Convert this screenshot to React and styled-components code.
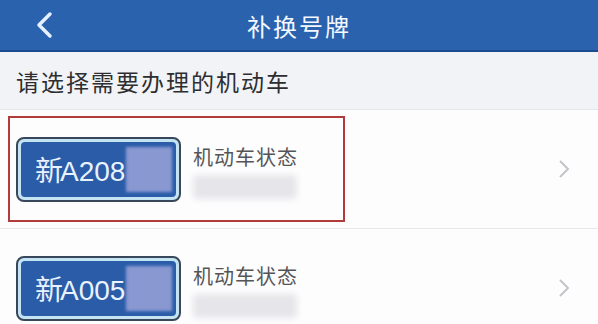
import React from "react";
import styled, { createGlobalStyle } from "styled-components";

const GlobalStyle = createGlobalStyle`
  body {
    margin: 0;
    background: #fdfdfe;
    font-family: "Liberation Sans", "Noto Sans CJK SC", sans-serif;
  }
`;

const Page = styled.div`
  width: 598px;
  height: 324px;
  overflow: hidden;
  background: #fdfdfe;
`;

const NavBar = styled.header`
  height: 50px;
  display: grid;
  grid-template-columns: 1fr auto 1fr;
  align-items: center;
  background: #2b62ad;
  border-bottom: 2px solid #1d4c8e;
`;

const BackButton = styled.div`
  padding-left: 35px;
  display: flex;
  align-items: center;
`;

const Title = styled.h1`
  margin: 0;
  font-family: "Noto Sans CJK SC", sans-serif;
  font-size: 24px;
  font-weight: 400;
  color: #f4f8ff;
  letter-spacing: 2px;
`;

const SectionHead = styled.div`
  height: 57px;
  display: flex;
  align-items: center;
  padding-left: 16px;
  background: #f2f3f7;
  border-bottom: 1px solid #e6e7ec;
  font-family: "Noto Sans CJK SC", sans-serif;
  font-size: 23px;
  letter-spacing: 2px;
  color: #2e2e30;
`;

const Row = styled.div`
  height: 118px;
  display: flex;
  align-items: center;
  padding: 0 28px 0 8px;
  border-bottom: 1px solid #e8e8ec;
`;

const Highlight = styled.div`
  width: 337px;
  height: 106px;
  box-sizing: border-box;
  display: flex;
  align-items: center;
  padding-left: 6px;
  border: 2px solid ${(p) => (p.$selected ? "#b23b3b" : "transparent")};
`;

const Plate = styled.div`
  width: 165px;
  height: 65px;
  box-sizing: border-box;
  padding: 3px;
  border: 2px solid #38475a;
  border-radius: 8px;
  background: #c4e4f4;
`;

const PlateFace = styled.div`
  height: 100%;
  display: flex;
  align-items: center;
  padding: 0 4px 0 14px;
  border-radius: 4px;
  background: #2a5ca8;
`;

const PlateText = styled.span`
  font-family: "Liberation Sans", "Noto Sans CJK SC", sans-serif;
  font-size: 28px;
  color: #e9f2ff;
  white-space: nowrap;
`;

const Province = styled.span`
  font-family: "Noto Sans CJK SC", sans-serif;
  letter-spacing: -3px;
`;

const Mask = styled.div`
  width: 48px;
  height: 45px;
  margin-left: 1px;
  background: #8a98d2;
  filter: blur(1.5px);
`;

const Info = styled.div`
  margin-left: 12px;
  padding-top: 6px;
  display: flex;
  flex-direction: column;
  gap: 6px;
`;

const Status = styled.span`
  font-family: "Noto Sans CJK SC", sans-serif;
  font-size: 20px;
  line-height: 24px;
  letter-spacing: 1px;
  color: #555558;
`;

const Hidden = styled.div`
  width: 104px;
  height: 24px;
  background: #e6e6ea;
  border-radius: 4px;
  filter: blur(3px);
`;

const Chevron = styled.svg`
  margin-left: auto;
  flex-shrink: 0;
`;

const cars = [
  { province: "新", number: "A208", selected: true },
  { province: "新", number: "A005", selected: false },
];

function CarRow({ car }) {
  return (
    <Row>
      <Highlight $selected={car.selected}>
        <Plate>
          <PlateFace>
            <PlateText>
              <Province>{car.province}</Province>
              {car.number}
            </PlateText>
            <Mask />
          </PlateFace>
        </Plate>
        <Info>
          <Status>机动车状态</Status>
          <Hidden />
        </Info>
      </Highlight>
      <Chevron width="12" height="20" viewBox="0 0 12 20">
        <path d="M2 2 L10 10 L2 18" fill="none" stroke="#c3c3c8" strokeWidth="2" />
      </Chevron>
    </Row>
  );
}

export default function App() {
  return (
    <Page>
      <GlobalStyle />
      <NavBar>
        <BackButton>
          <svg width="18" height="28" viewBox="0 0 18 28">
            <path
              d="M15 3 L4 14 L15 25"
              fill="none"
              stroke="#e6f1ff"
              strokeWidth="3.5"
              strokeLinecap="round"
              strokeLinejoin="round"
            />
          </svg>
        </BackButton>
        <Title>补换号牌</Title>
        <div />
      </NavBar>
      <SectionHead>请选择需要办理的机动车</SectionHead>
      {cars.map((car) => (
        <CarRow key={car.number} car={car} />
      ))}
    </Page>
  );
}
